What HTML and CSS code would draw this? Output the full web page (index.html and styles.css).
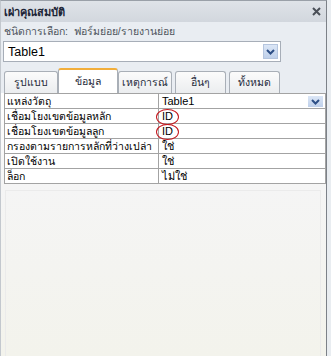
FILE: index.html
```html
<!DOCTYPE html>
<html lang="th">
<head>
    <meta charset="UTF-8">
    <meta name="viewport" content="width=device-width, initial-scale=1.0">
    <title>เผ่าคุณสมบัติ</title>
    <link rel="stylesheet" href="styles.css">
</head>
<body>
    <div class="panel">
        <div class="titlebar">
            <span class="title">เผ่าคุณสมบัติ</span>
            <svg class="close" width="9" height="9" viewBox="0 0 9 9">
                <path d="M1 1 L8 8 M8 1 L1 8" stroke="#4a4f57" stroke-width="2" fill="none"/>
            </svg>
        </div>

        <div class="caption">ชนิดการเลือก:&nbsp; ฟอร์มย่อย/รายงานย่อย</div>

        <div class="combo">
            <span class="combo-text">Table1</span>
            <span class="combo-btn">
                <svg width="9" height="6" viewBox="0 0 9 6">
                    <path d="M1 1 L4.5 4.5 L8 1" stroke="#2d4f86" stroke-width="2" fill="none"/>
                </svg>
            </span>
        </div>

        <div class="tabs">
            <div class="tab">รูปแบบ</div>
            <div class="tab active">ข้อมูล</div>
            <div class="tab">เหตุการณ์</div>
            <div class="tab gap">อื่นๆ</div>
            <div class="tab gap">ทั้งหมด</div>
        </div>

        <div class="sheet">
            <table class="props">
                <tr>
                    <td class="name">แหล่งวัตถุ</td>
                    <td class="value">Table1
                        <span class="cell-btn">
                            <svg width="9" height="6" viewBox="0 0 9 6">
                                <path d="M1 1 L4.5 4.5 L8 1" stroke="#2d4f86" stroke-width="2" fill="none"/>
                            </svg>
                        </span>
                    </td>
                </tr>
                <tr>
                    <td class="name">เชื่อมโยงเขตข้อมูลหลัก</td>
                    <td class="value"><span class="mark">ID</span></td>
                </tr>
                <tr>
                    <td class="name">เชื่อมโยงเขตข้อมูลลูก</td>
                    <td class="value"><span class="mark">ID</span></td>
                </tr>
                <tr>
                    <td class="name">กรองตามรายการหลักที่ว่างเปล่า</td>
                    <td class="value">ใช่</td>
                </tr>
                <tr>
                    <td class="name">เปิดใช้งาน</td>
                    <td class="value">ใช่</td>
                </tr>
                <tr>
                    <td class="name">ล็อก</td>
                    <td class="value">ไม่ใช่</td>
                </tr>
            </table>
            <div class="frame"></div>
        </div>
    </div>
</body>
</html>
```

FILE: styles.css
```css
body {
    margin: 0;
    background-color: #e9edf1;
    font-family: "Liberation Sans", sans-serif;
    font-size: 10.5px;
    color: #000;
}
.panel {
    width: 327px;
    height: 356px;
    border-top: 1px solid #9aa0a8;
    border-right: 1px solid #7c8188;
    border-left: 1px solid #c3c8ce;
    background-color: #e9edf2;
    box-sizing: border-box;
    display: flex;
    flex-direction: column;
}
.titlebar {
    height: 21px;
    background: linear-gradient(#dfe3e8, #d2d7de);
    display: flex;
    align-items: center;
    justify-content: space-between;
    padding: 0 5px 0 3px;
}
.title {
    font-weight: bold;
    font-size: 11px;
    color: #1b2436;
}
.caption {
    height: 19px;
    line-height: 19px;
    padding-left: 3px;
    color: #4f555d;
}
.combo {
    margin-left: 2px;
    width: 278px;
    height: 21px;
    background-color: #fff;
    border: 1px solid #a7aeb8;
    box-sizing: border-box;
    display: flex;
    align-items: center;
    justify-content: space-between;
    padding: 0 2px 0 4px;
}
.combo-text {
    font-size: 12.5px;
}
.combo-btn {
    width: 15px;
    height: 15px;
    background: linear-gradient(#dbe6f6, #bfd0ea);
    border: 1px solid #b5c5de;
    box-sizing: border-box;
    display: flex;
    align-items: center;
    justify-content: center;
}
.tabs {
    display: flex;
    align-items: flex-end;
    padding-left: 3px;
    margin-top: 5px;
    height: 26px;
}
.tab {
    width: 54px;
    height: 22px;
    box-sizing: border-box;
    border: 1px solid #a9afb7;
    border-bottom: none;
    border-radius: 3px 3px 0 0;
    background: linear-gradient(#fbfbfb, #ebedef);
    display: flex;
    align-items: center;
    justify-content: center;
    color: #1f2a3a;
}
.tab.active {
    width: 60px;
    height: 25px;
    background: #fff;
    border-top: 2px solid #f2ae3b;
    align-items: flex-start;
    padding-top: 3px;
}
.tab.gap {
    margin-left: 3px;
    width: 51px;
}
.sheet {
    flex: 1;
    background: linear-gradient(#ffffff 0%, #f5f5f5 35%, #f3f3ec 100%);
    padding: 0 0 0 3px;
    position: relative;
}
.props {
    border-collapse: collapse;
    width: 322px;
    background: #fff;
}
.props td {
    border: 1px solid #a3a3a3;
    height: 14px;
    padding: 0 0 0 2px;
    line-height: 14px;
    white-space: nowrap;
}
.props .name {
    width: 151px;
}
.props .value {
    position: relative;
    padding-left: 3px;
    font-size: 11px;
}
.cell-btn {
    position: absolute;
    right: 2px;
    top: 2px;
    width: 15px;
    height: 11px;
    background: linear-gradient(#dbe6f6, #bfd0ea);
    display: flex;
    align-items: center;
    justify-content: center;
}
.mark {
    position: relative;
}
.mark::after {
    content: "";
    position: absolute;
    left: -6px;
    top: -1px;
    width: 21px;
    height: 14px;
    border: 1px solid #c4161c;
    border-radius: 50%;
}
.frame {
    position: absolute;
    left: 4px;
    right: 5px;
    top: 97px;
    bottom: 0;
    border: 1px solid #ebebeb;
    border-bottom: none;
}
```
